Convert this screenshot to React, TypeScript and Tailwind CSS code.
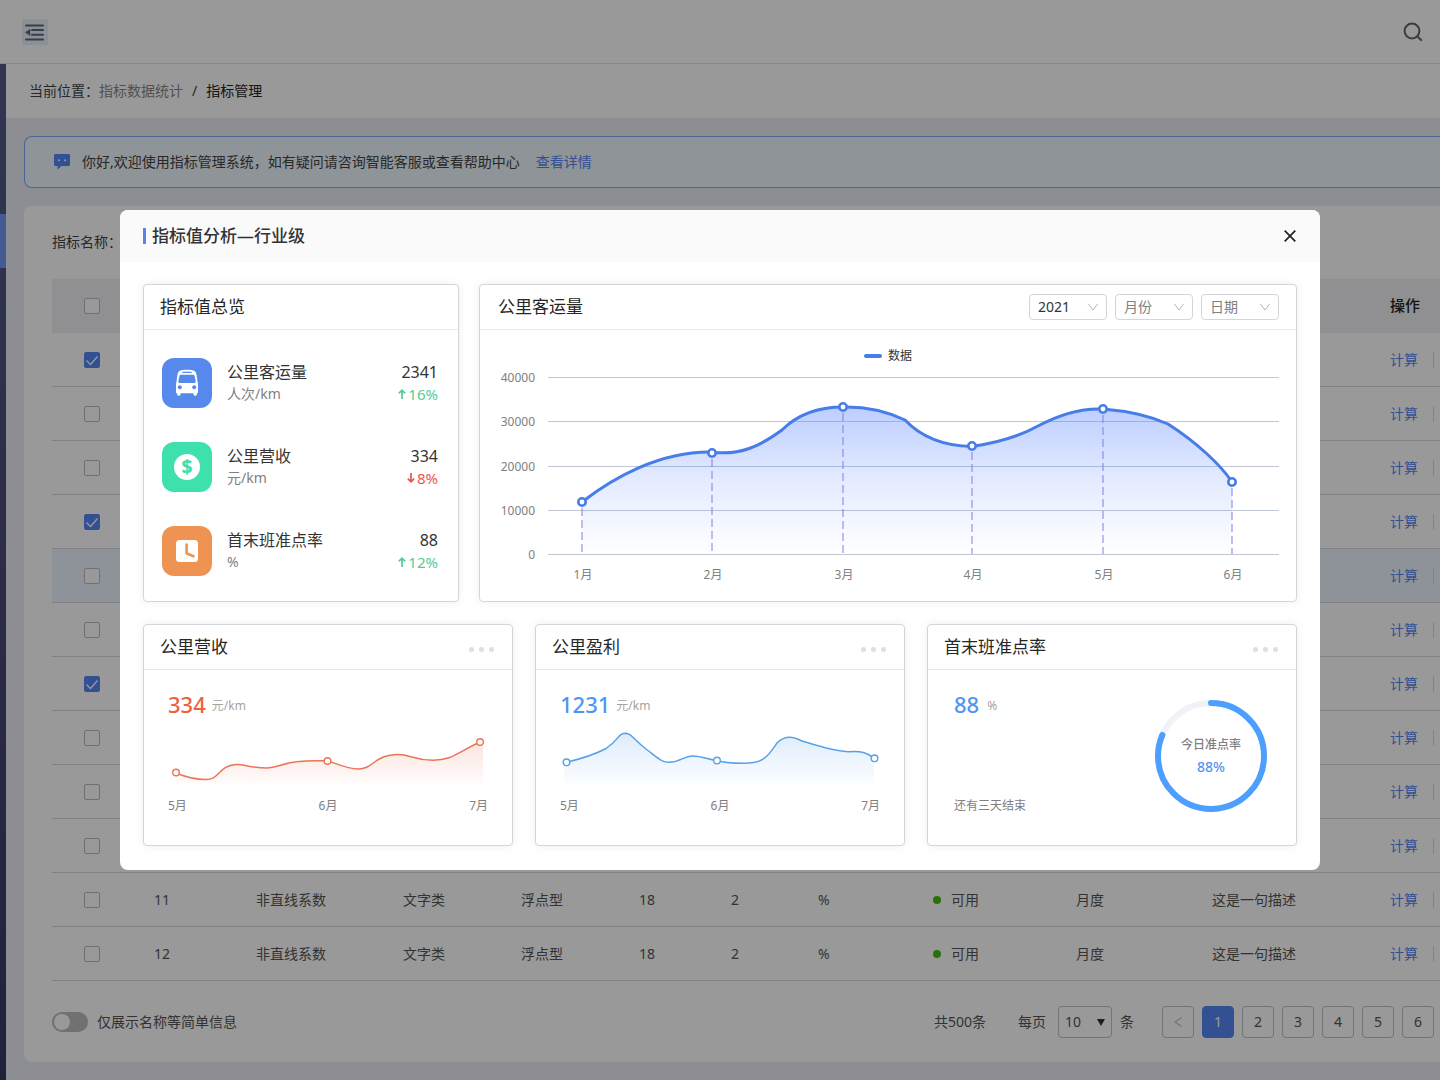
import React from "react";

type Row = {
  id: number;
  checked?: boolean;
  active?: boolean;
  name?: string;
  category?: string;
  dataType?: string;
  length?: number;
  precision?: number;
  unit?: string;
  status?: string;
  period?: string;
  desc?: string;
};

const detail = {
  name: "非直线系数",
  category: "文字类",
  dataType: "浮点型",
  length: 18,
  precision: 2,
  unit: "%",
  status: "可用",
  period: "月度",
  desc: "这是一句描述",
};

const rows: Row[] = [
  { id: 1, checked: true },
  { id: 2 },
  { id: 3 },
  { id: 4, checked: true },
  { id: 5, active: true },
  { id: 6 },
  { id: 7, checked: true },
  { id: 8 },
  { id: 9 },
  { id: 10 },
  { id: 11, ...detail },
  { id: 12, ...detail },
];

const points = [
  { label: "1月", x: 102, y: 138 },
  { label: "2月", x: 232, y: 89 },
  { label: "3月", x: 363, y: 43 },
  { label: "4月", x: 492, y: 82 },
  { label: "5月", x: 623, y: 45 },
  { label: "6月", x: 752, y: 118 },
];

const gridLines = [
  { label: "40000", y: 13.5 },
  { label: "30000", y: 57.5 },
  { label: "20000", y: 102.5 },
  { label: "10000", y: 146.5 },
  { label: "0", y: 190.5 },
];

const mainLine =
  "M102 138 C133 114 180 87 232 88 C260 92 280 82 302 66 C318 50 340 43 363 43 C384 42.5 406 47 425 56 C442 74 466 82 492 82.5 C516 79 538 73 557 62.5 C580 50 600 44 623 45 C648 47 670 52 688 60 C716 78 740 100 752 118";

const revenueLine =
  "M8 51 C20 56 30 57.5 38 57.5 C52 57.5 50 44 68 42.5 C76 42 82 46 99 46 C112 46 112 40 138 39 L159 38.5 C172 43 180 47 190 47 C206 47 204 34 229 32.5 C242 32 244 38 265 38.3 C285 38 288 31 312 20";

const profitLine =
  "M6 40.5 C20 37 34 33 46 26.5 C60 17 58 11.5 65 11.3 C72 11.5 73 17 86 27 C98 36 102 40.5 109 40.3 C121 40 124 34 132 34 C143 34 149 38 157 38.5 C165 41 173 41.3 182 41.3 C204 42 208 34 217 21 C221 17 225 15.3 230 15.3 C236 15.3 239 18 243 19.3 C258 24 275 29.7 289 29.7 C301 28.5 307 31 314 36";

const Checkbox = ({
  label,
  defaultChecked = false,
}: {
  label: string;
  defaultChecked?: boolean;
}) => {
  return (
    <span className="relative block size-4">
      <input
        type="checkbox"
        aria-label={label}
        defaultChecked={defaultChecked}
        className="peer block size-4 appearance-none rounded-xs border border-[#b8bbc2] bg-white checked:border-[#5585f5] checked:bg-[#5585f5]"
      />
      <svg
        viewBox="0 0 16 16"
        className="pointer-events-none absolute inset-0 hidden size-4 peer-checked:block"
        fill="none"
        stroke="#fff"
        strokeWidth="1.3"
      >
        <path d="M2.5 8.5 L6.5 12.5 L13.5 4.5" />
      </svg>
    </span>
  );
};

const BusIcon = () => (
  <svg viewBox="0 0 50 50" className="size-[50px]">
    <path
      fill="#fff"
      d="M19.5 12.2 C23 11.6 27 11.6 30.5 12.2 C32.8 12.6 34 14 34.4 16 L35.6 24 C35.9 25 36 26 36 27 V34 C36 35 35.6 35.2 35 35.2 V36 C35 38.4 31.4 38.4 31.4 36 V35.2 H18.6 V36 C18.6 38.4 15 38.4 15 36 V35.2 C14.4 35.2 14 35 14 34 V27 C14 26 14.1 25 14.4 24 L15.6 16 C16 14 17.2 12.6 19.5 12.2 Z"
    />
    <rect x="20.2" y="13.8" width="9.6" height="1.3" rx=".6" fill="#5788ec" />
    <path
      fill="#5788ec"
      d="M19 16.8 H31 C32 16.8 32.4 17.2 32.6 18 L33.6 23.2 C33.8 24.4 33.3 25 32.3 25 H17.7 C16.7 25 16.2 24.4 16.4 23.2 L17.4 18 C17.6 17.2 18 16.8 19 16.8 Z"
    />
    <circle cx="17.8" cy="29.2" r="2" fill="#5788ec" />
    <circle cx="32.2" cy="29.2" r="2" fill="#5788ec" />
  </svg>
);

const MoneyIcon = () => (
  <svg viewBox="0 0 50 50" className="size-[50px]">
    <circle cx="25" cy="25" r="13" fill="#fff" />
    <text
      x="25"
      y="32"
      textAnchor="middle"
      fontSize="19"
      fontWeight="800"
      fill="#3ee0ae"
    >
      $
    </text>
  </svg>
);

const ClockIcon = () => (
  <svg viewBox="0 0 50 50" className="size-[50px]">
    <rect x="14" y="14" width="22" height="22" rx="3.5" fill="#fff" />
    <path
      d="M24.6 18.5 V27.2 L31.5 30.3"
      fill="none"
      stroke="#ee9351"
      strokeWidth="2.6"
      strokeLinecap="round"
      strokeLinejoin="round"
    />
  </svg>
);

const ArrowIcon = ({ down = false }: { down?: boolean }) => (
  <svg
    viewBox="0 0 8 12"
    className={down ? "h-3 w-2 rotate-180" : "h-3 w-2"}
    fill="none"
    stroke="currentColor"
    strokeWidth="1.7"
  >
    <path d="M4 11 V2.2 M.8 5.4 L4 2.2 L7.2 5.4" />
  </svg>
);

const overview = [
  {
    title: "公里客运量",
    unit: "人次/km",
    value: "2341",
    rate: "16%",
    down: false,
    bg: "bg-[#5788ec]",
    icon: <BusIcon />,
  },
  {
    title: "公里营收",
    unit: "元/km",
    value: "334",
    rate: "8%",
    down: true,
    bg: "bg-[#3ee0ae]",
    icon: <MoneyIcon />,
  },
  {
    title: "首末班准点率",
    unit: "%",
    value: "88",
    rate: "12%",
    down: false,
    bg: "bg-[#ee9351]",
    icon: <ClockIcon />,
  },
];

const Card = ({
  title,
  extra,
  className = "",
  headClass = "pl-4 pr-[18px]",
  children,
}: {
  title: string;
  extra?: React.ReactNode;
  className?: string;
  headClass?: string;
  children: React.ReactNode;
}) => {
  return (
    <section
      className={`rounded border border-[#d3d6d9] bg-white shadow-[0_0_8px_rgba(0,0,0,0.07)] ${className}`}
    >
      <header
        className={`flex h-[45px] items-center justify-between border-b border-[#e8e8e8] ${headClass}`}
      >
        <h3 className="text-[17px] leading-6 text-[#262626]">{title}</h3>
        {extra}
      </header>
      {children}
    </section>
  );
};

const MoreButton = () => (
  <button type="button" aria-label="更多" className="flex gap-[5px] pt-1">
    <span className="size-[5px] rounded-full bg-[#dcdfe4]" />
    <span className="size-[5px] rounded-full bg-[#dcdfe4]" />
    <span className="size-[5px] rounded-full bg-[#dcdfe4]" />
  </button>
);

const FilterSelect = ({
  label,
  value,
  color,
}: {
  label: string;
  value: string;
  color: string;
}) => {
  return (
    <span className="relative block">
      <select
        aria-label={label}
        className={`block h-[26px] w-[78px] appearance-none rounded-sm border border-[#d3d6d9] bg-white pl-2 text-sm leading-5 ${color}`}
      >
        <option>{value}</option>
      </select>
      <svg
        viewBox="0 0 10 8"
        className="pointer-events-none absolute top-[9px] right-[9px] h-2 w-[10px]"
        fill="none"
        stroke="#b0b3b8"
      >
        <path d="M.5 1 L5 7 L9.5 1" />
      </svg>
    </span>
  );
};

const PassengerChart = () => {
  return (
    <svg viewBox="0 0 816 236" className="block w-full" fontSize="12">
      <defs>
        <linearGradient id="mainFill" x1="0" y1="0" x2="0" y2="1">
          <stop offset="0" stopColor="#4b7bff" stopOpacity=".37" />
          <stop offset="0.5" stopColor="#4b7bff" stopOpacity=".15" />
          <stop offset="1" stopColor="#4b7bff" stopOpacity="0" />
        </linearGradient>
      </defs>
      {gridLines.map((line) => (
        <g key={line.label}>
          <path d={`M68 ${line.y} H799`} stroke="#c0c8d4" />
          <text x="55" y={line.y + 4.5} textAnchor="end" fill="#808080">
            {line.label}
          </text>
        </g>
      ))}
      <path d={`${mainLine} V190 H102 Z`} fill="url(#mainFill)" />
      {points.map((p) => (
        <path
          key={p.label}
          d={`M${p.x} ${p.y + 6} V190`}
          stroke="#8878ea"
          strokeOpacity=".5"
          strokeWidth="2"
          strokeDasharray="8 4"
        />
      ))}
      <path d={mainLine} fill="none" stroke="#467de8" strokeWidth="3" />
      {points.map((p) => (
        <g key={p.label}>
          <circle
            cx={p.x}
            cy={p.y}
            r="3.7"
            fill="#fff"
            stroke="#467de8"
            strokeWidth="2.6"
          />
          <text x={p.x + 1} y="215" textAnchor="middle" fill="#808080">
            {p.label}
          </text>
        </g>
      ))}
    </svg>
  );
};

const TrendCard = ({
  id,
  title,
  value,
  color,
  stroke,
  line,
  area,
  dots,
}: {
  id: string;
  title: string;
  value: string;
  color: string;
  stroke: string;
  line: string;
  area: string;
  dots: number[][];
}) => {
  return (
    <Card title={title} extra={<MoreButton />}>
      <div className="px-6 pt-5 pb-[29px]">
        <p className="flex items-end gap-1.5">
          <strong className={`text-[22px] leading-7 font-medium ${color}`}>
            {value}
          </strong>
          <span className="text-xs leading-6 text-[#a3a3a3]">元/km</span>
        </p>
        <svg viewBox="0 0 320 72" className="mt-1 block w-full">
          <defs>
            <linearGradient id={id} x1="0" y1="0" x2="0" y2="1">
              <stop offset="0" stopColor={stroke} stopOpacity=".2" />
              <stop offset="1" stopColor={stroke} stopOpacity="0.02" />
            </linearGradient>
          </defs>
          <path d={area} fill={`url(#${id})`} />
          <path d={line} fill="none" stroke={stroke} strokeWidth="1.5" />
          {dots.map(([x, y]) => (
            <circle
              key={x}
              cx={x}
              cy={y}
              r="3.3"
              fill="#fff"
              stroke={stroke}
              strokeWidth="1.4"
            />
          ))}
        </svg>
        <div className="mt-0.5 flex justify-between text-xs leading-5 text-[#808080]">
          <span>5月</span>
          <span>6月</span>
          <span>7月</span>
        </div>
      </div>
    </Card>
  );
};

const AnalysisModal = () => {
  return (
    <div className="fixed inset-0 flex items-center justify-center bg-black/40 px-4">
      <div
        role="dialog"
        aria-labelledby="modal-title"
        className="w-full max-w-[1200px] overflow-hidden rounded-lg bg-white"
      >
        <header className="flex h-[52px] items-center justify-between bg-[#fafafa] pr-6 pl-[23px]">
          <h2
            id="modal-title"
            className="flex items-center gap-1.5 text-[17px] leading-6 font-medium text-[#333]"
          >
            <span className="h-4 w-[3px] bg-[#5585e8]" />
            指标值分析—行业级
          </h2>
          <button type="button" aria-label="关闭">
            <svg
              viewBox="0 0 12 12"
              className="size-3"
              fill="none"
              stroke="#222"
              strokeWidth="1.7"
            >
              <path d="M.7 .7 L11.3 11.3 M11.3 .7 L.7 11.3" />
            </svg>
          </button>
        </header>

        <div className="flex flex-col gap-[22px] px-[23px] pt-[22px] pb-6">
          <div className="flex gap-5">
            <Card title="指标值总览" className="w-[316px] shrink-0">
              <ul className="flex flex-col gap-[34px] pt-7 pr-5 pb-[25px] pl-[18px]">
                {overview.map((item) => (
                  <li key={item.title} className="flex items-center">
                    <span className={`rounded-xl ${item.bg}`}>{item.icon}</span>
                    <div className="ml-[15px]">
                      <p className="text-base leading-[22px] text-[#333]">
                        {item.title}
                      </p>
                      <p className="text-sm leading-[22px] text-[#808080]">
                        {item.unit}
                      </p>
                    </div>
                    <div className="ml-auto text-right">
                      <p className="text-base leading-[22px] text-[#333]">
                        {item.value}
                      </p>
                      <p
                        className={`flex items-center justify-end gap-0.5 text-[15px] leading-[22px] ${item.down ? "text-[#e85550]" : "text-[#52cc94]"}`}
                      >
                        <ArrowIcon down={item.down} />
                        {item.rate}
                      </p>
                    </div>
                  </li>
                ))}
              </ul>
            </Card>

            <Card
              title="公里客运量"
              className="min-w-0 flex-1"
              headClass="pl-[18px] pr-[17px]"
              extra={
                <div className="flex gap-2">
                  <FilterSelect
                    label="年份"
                    value="2021"
                    color="text-[#333]"
                  />
                  <FilterSelect
                    label="月份"
                    value="月份"
                    color="text-[#808080]"
                  />
                  <FilterSelect
                    label="日期"
                    value="日期"
                    color="text-[#808080]"
                  />
                </div>
              }
            >
              <p className="mt-[18px] flex items-center justify-center gap-1.5 text-xs leading-4 text-[#333]">
                <span className="h-1 w-[18px] rounded-full bg-[#467de8]" />
                数据
              </p>
              <PassengerChart />
            </Card>
          </div>

          <div className="grid grid-cols-3 gap-[22px]">
            <TrendCard
              id="revenueFill"
              title="公里营收"
              value="334"
              color="text-[#ec6140]"
              stroke="#ea7556"
              line={revenueLine}
              area={`${revenueLine} L315 19 V62 H8 Z`}
              dots={[
                [8, 50.5],
                [159.5, 39],
                [312, 20],
              ]}
            />
            <TrendCard
              id="profitFill"
              title="公里盈利"
              value="1231"
              color="text-[#5096f0]"
              stroke="#58a0e8"
              line={profitLine}
              area={`${profitLine} V62 H4 V41 Z`}
              dots={[
                [6.5, 40.3],
                [157, 38.5],
                [314.5, 36.3],
              ]}
            />
            <Card title="首末班准点率" extra={<MoreButton />}>
              <div className="flex justify-between pt-5 pr-[29px] pb-[29px] pl-[26px]">
                <div className="flex flex-col justify-between">
                  <p className="flex items-end gap-2">
                    <strong className="text-[22px] leading-7 font-medium text-[#5096f0]">
                      88
                    </strong>
                    <span className="text-xs leading-6 text-[#a3a3a3]">%</span>
                  </p>
                  <p className="text-xs leading-5 text-[#808080]">
                    还有三天结束
                  </p>
                </div>
                <div className="relative mt-[10px] mb-1 size-28">
                  <svg
                    viewBox="0 0 112 112"
                    className="size-28"
                    fill="none"
                    strokeWidth="6"
                  >
                    <circle cx="56" cy="56" r="53" stroke="#f0f2f7" />
                    <circle
                      cx="56"
                      cy="56"
                      r="53"
                      stroke="#4c9ffc"
                      strokeLinecap="round"
                      pathLength="100"
                      strokeDasharray="81.5 100"
                      transform="rotate(-90 56 56)"
                    />
                  </svg>
                  <div className="absolute inset-0 flex flex-col items-center justify-center gap-0.5">
                    <span className="text-xs leading-5 font-medium text-[#808080]">
                      今日准点率
                    </span>
                    <span className="text-sm leading-5 font-medium text-[#5096f0]">
                      88%
                    </span>
                  </div>
                </div>
              </div>
            </Card>
          </div>
        </div>
      </div>
    </div>
  );
};

const IndicatorTable = () => {
  return (
    <table className="w-full table-fixed border-separate border-spacing-0 text-left text-sm text-[#555]">
      <colgroup>
        <col className="w-[102px]" />
        <col className="w-[102px]" />
        <col className="w-[147px]" />
        <col className="w-[118px]" />
        <col className="w-[118px]" />
        <col className="w-[92px]" />
        <col className="w-[87px]" />
        <col className="w-[115px]" />
        <col className="w-[143px]" />
        <col className="w-[136px]" />
        <col className="w-[178px]" />
        <col />
      </colgroup>
      <thead className="bg-[#f0f1f5] text-[15px] text-[#222]">
        <tr>
          <th className="h-[54px] pl-8">
            <Checkbox label="全选" />
          </th>
          <th colSpan={10} />
          <th className="font-medium">操作</th>
        </tr>
      </thead>
      <tbody className="[&_td]:h-[54px] [&_td]:border-b [&_td]:border-[#d6d8dc]">
        {rows.map((row) => (
          <tr key={row.id} className={row.active ? "bg-[#edf5ff]" : ""}>
            <td className="pl-8">
              <Checkbox label={`选择${row.id}`} defaultChecked={row.checked} />
            </td>
            <td>{row.name && row.id}</td>
            <td>{row.name}</td>
            <td>{row.category}</td>
            <td>{row.dataType}</td>
            <td>{row.length}</td>
            <td>{row.precision}</td>
            <td>{row.unit}</td>
            <td>
              {row.status && (
                <span className="flex items-center gap-[10px]">
                  <span className="size-2 rounded-full bg-[#43bb12]" />
                  {row.status}
                </span>
              )}
            </td>
            <td>{row.period}</td>
            <td>{row.desc}</td>
            <td>
              <span className="flex items-center gap-[15px]">
                <a href="#" className="shrink-0 text-[#5585f5]">
                  计算
                </a>
                <span className="h-4 w-px shrink-0 bg-[#d6d8dc]" />
              </span>
            </td>
          </tr>
        ))}
      </tbody>
    </table>
  );
};

const App = () => {
  return (
    <div className="flex min-h-screen flex-col overflow-hidden bg-[#ebedf5] font-['Noto_Sans','Noto_Sans_CJK_SC',sans-serif] text-sm text-[#444]">
      <header className="flex h-16 items-center justify-between border-b border-[#dfe1e6] bg-white pr-[17px] pl-[22px]">
        <button
          type="button"
          aria-label="收起菜单"
          className="size-[26px] bg-[#e9f1fb]"
        >
          <svg
            viewBox="0 0 26 26"
            className="size-[26px]"
            stroke="#5d6878"
            strokeWidth="2"
            strokeLinecap="round"
          >
            <path d="M4 6.5 H21 M10 11 H21 M10 15.7 H21 M4 20.5 H21" />
            <path
              d="M3.5 13.3 L8 10.3 V16.3 Z"
              fill="#5d6878"
              strokeWidth=".5"
            />
          </svg>
        </button>
        <button type="button" aria-label="搜索">
          <svg
            viewBox="0 0 20 20"
            className="size-5"
            fill="none"
            stroke="#626670"
            strokeWidth="2"
          >
            <circle cx="9" cy="9" r="7.4" />
            <path d="M14.2 14.2 L18.8 18.8" />
          </svg>
        </button>
      </header>

      <div className="flex flex-1">
        <aside className="w-1.5 shrink-0 bg-linear-to-b from-[#535a86] via-[#4a4a7c] to-[#363a64] pt-[150px]">
          <div className="h-[54px] bg-[#6f98f5]" />
        </aside>

        <main className="min-w-0 flex-1">
          <nav className="flex h-[54px] items-center bg-white pl-[23px]">
            当前位置：
            <a href="#" className="text-[#888]">
              指标数据统计
            </a>
            <span className="mx-[9px]">/</span>
            <span className="text-[#222]">指标管理</span>
          </nav>

          <div className="flex flex-col gap-[18px] py-[18px] pl-[18px]">
            <div className="flex h-[52px] items-center rounded-l-lg border border-r-0 border-[#7ea8f8] bg-[#edf7fd] pl-[29px]">
              <svg viewBox="0 0 16 16" className="size-4">
                <path
                  fill="#5585f5"
                  d="M1.5 0 H14.5 C15.4 0 16 .6 16 1.5 V10.5 C16 11.4 15.4 12 14.5 12 H7.5 L3.5 15.5 V12 H1.5 C.6 12 0 11.4 0 10.5 V1.5 C0 .6 .6 0 1.5 0 Z"
                />
                <circle cx="5" cy="6.3" r="1.1" fill="#edf7ff" />
                <circle cx="11" cy="6.3" r="1.1" fill="#edf7ff" />
              </svg>
              <p className="ml-3">
                你好,欢迎使用指标管理系统，如有疑问请咨询智能客服或查看帮助中心
              </p>
              <a href="#" className="ml-4 text-[#5585f5]">
                查看详情
              </a>
            </div>

            <section className="rounded-l-lg bg-white pt-[26px] pb-6 pl-7">
              <p className="mb-[27px] leading-5">指标名称：</p>
              <IndicatorTable />
              <div className="mt-[25px] flex h-8 items-center pr-1.5 text-[#555]">
                <label className="flex items-center gap-[9px]">
                  <input
                    type="checkbox"
                    role="switch"
                    className="h-5 w-9 appearance-none rounded-full bg-[#bcbcbc] before:m-0.5 before:block before:size-4 before:rounded-full before:bg-white checked:bg-[#5585f5] checked:before:ml-[18px]"
                  />
                  仅展示名称等简单信息
                </label>
                <span className="ml-auto">共500条</span>
                <label className="ml-8 flex items-center">
                  每页
                  <span className="relative mr-2 ml-3 block">
                    <select className="block h-8 w-[54px] appearance-none rounded-sm border border-[#bfc2c8] bg-white pl-1.5">
                      <option>10</option>
                    </select>
                    <svg
                      viewBox="0 0 8 7"
                      className="pointer-events-none absolute top-[13px] right-[7px] h-[7px] w-2"
                    >
                      <path d="M0 0 H8 L4 7 Z" fill="#333" />
                    </svg>
                  </span>
                  条
                </label>
                <div className="ml-7 flex gap-2">
                  <button
                    type="button"
                    aria-label="上一页"
                    className="flex size-8 items-center justify-center rounded-sm border border-[#bfc2c8]"
                  >
                    <svg
                      viewBox="0 0 8 10"
                      className="h-[10px] w-2"
                      fill="none"
                      stroke="#bfc2c8"
                      strokeWidth="1.2"
                    >
                      <path d="M7.5 .5 L1 5 L7.5 9.5" />
                    </svg>
                  </button>
                  {[1, 2, 3, 4, 5, 6].map((page) => (
                    <button
                      key={page}
                      type="button"
                      className={`size-8 rounded-sm border ${page === 1 ? "border-[#5585f5] bg-[#5585f5] text-white" : "border-[#bfc2c8]"}`}
                    >
                      {page}
                    </button>
                  ))}
                </div>
              </div>
            </section>
          </div>
        </main>
      </div>

      <AnalysisModal />
    </div>
  );
};

export default App;
